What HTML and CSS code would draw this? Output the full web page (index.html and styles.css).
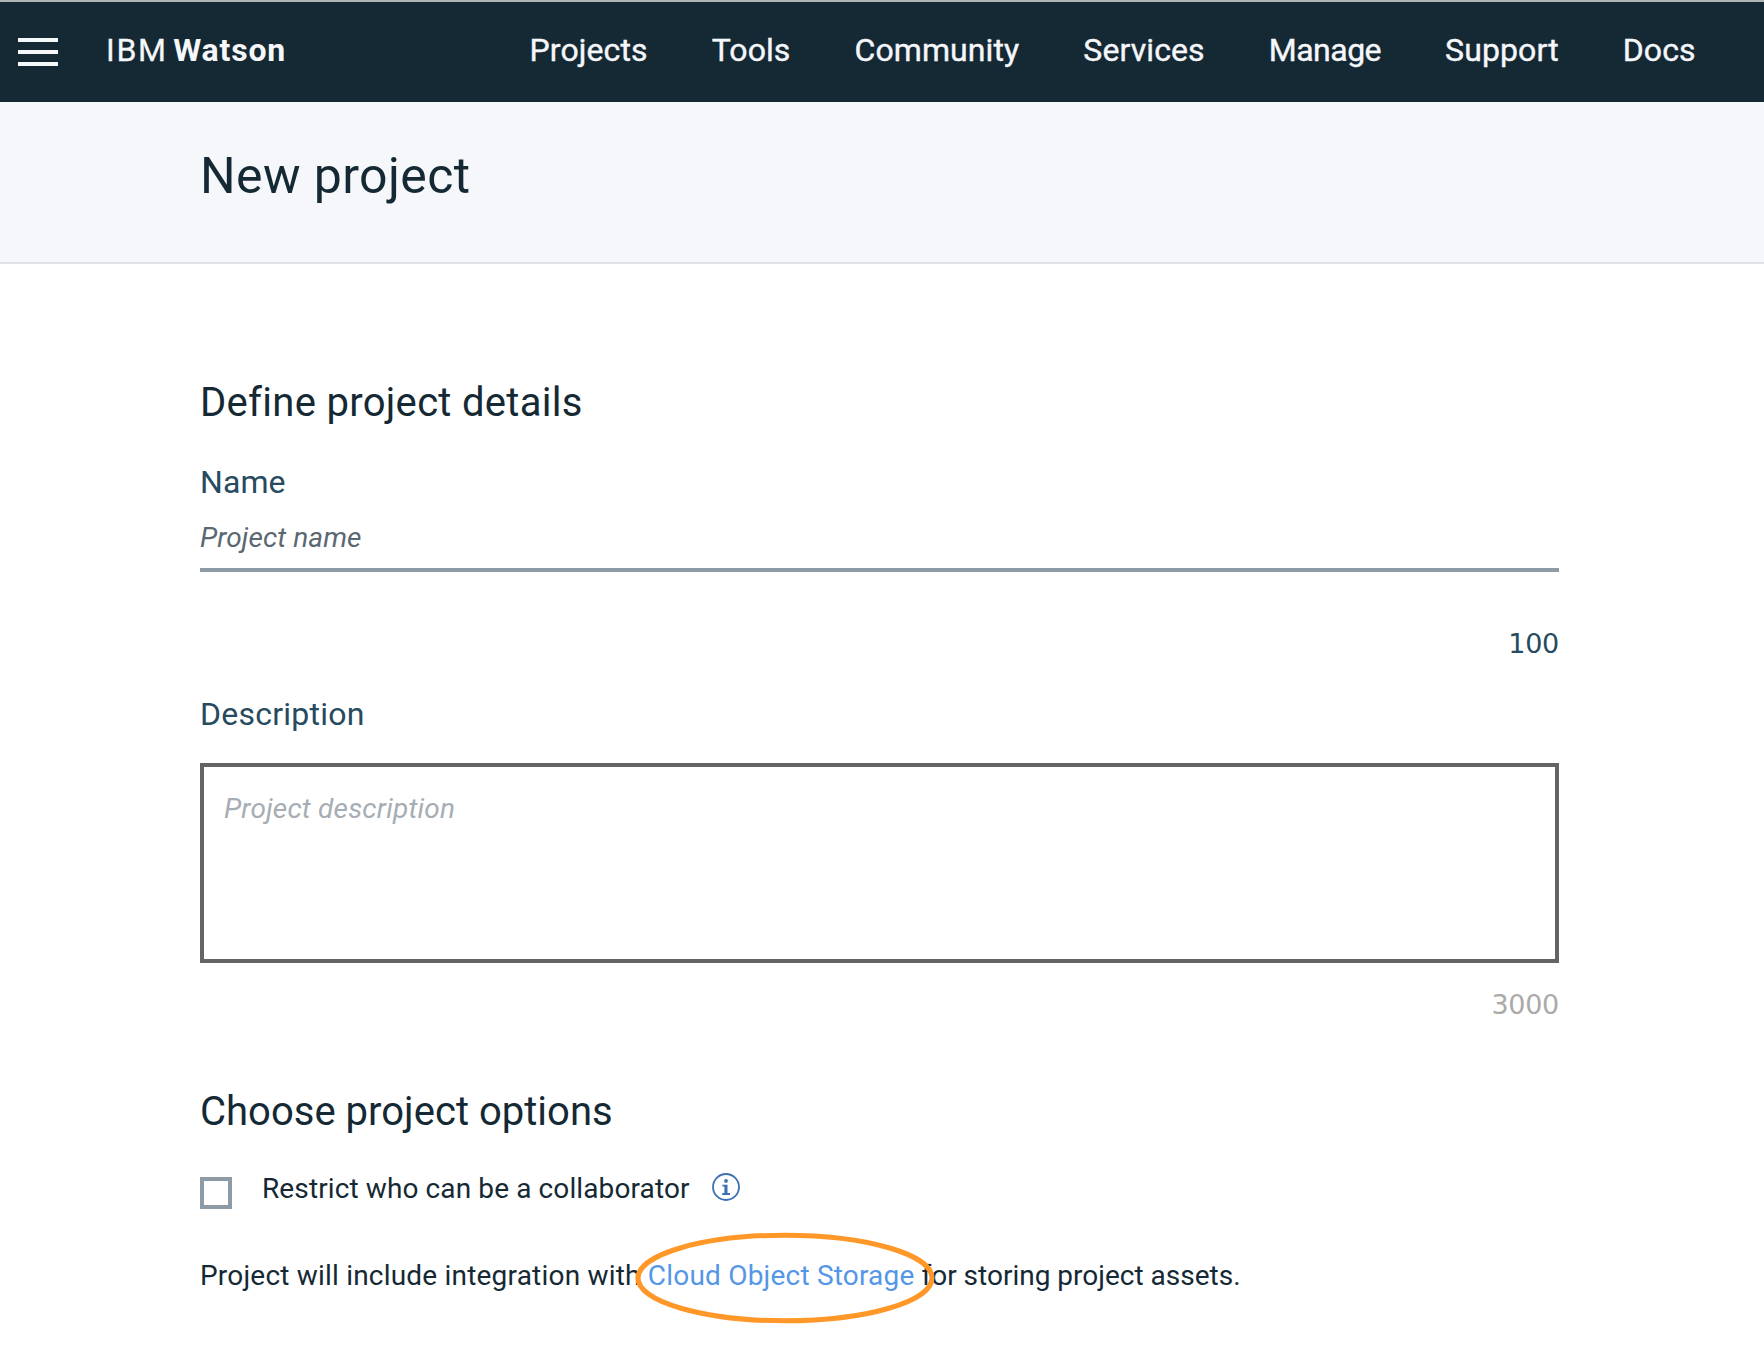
FILE: index.html
```html
<!DOCTYPE html>
<html lang="en">
<head>
  <meta charset="utf-8">
  <title>New project - IBM Watson</title>
  <link rel="stylesheet" href="styles.css">
</head>
<body>
  <header class="topbar">
    <svg class="menu-icon" width="40" height="28" viewBox="0 0 40 28" aria-hidden="true">
      <path d="M0 2H40M0 14H40M0 26H40" stroke="#f5f7fa" stroke-width="4"/>
    </svg>
    <div class="brand"><span class="brand-ibm">IBM </span><strong class="brand-name">Watson</strong></div>
    <nav class="nav">
      <a>Projects</a>
      <a>Tools</a>
      <a>Community</a>
      <a>Services</a>
      <a class="tight">Manage</a>
      <a>Support</a>
      <a>Docs</a>
    </nav>
  </header>

  <div class="page-head"><h1 class="page-title">New project</h1></div>

  <main class="form">
    <h2 class="section-title">Define project details</h2>
    <label class="label" for="name">Name</label>
    <input class="name-input" id="name" type="text" placeholder="Project name">
    <div class="counter">100</div>

    <label class="label label-desc" for="desc">Description</label>
    <textarea class="desc-input" id="desc" placeholder="Project description"></textarea>
    <div class="counter counter-muted">3000</div>

    <h2 class="section-title section-options">Choose project options</h2>
    <div class="option">
      <span class="checkbox"></span>
      <span class="option-text">Restrict who can be a collaborator</span>
      <svg class="info" width="28" height="28" viewBox="0 0 28 28" aria-hidden="true">
        <circle cx="14" cy="14" r="13" fill="none" stroke="#3d70b2" stroke-width="1.8"/>
        <circle cx="14" cy="7.9" r="1.9" fill="#3d70b2"/>
        <path d="M10.4 11.8H15.5V20H18V22H10.2V20H12.4V13.6H10.4Z" fill="#3d70b2"/>
      </svg>
    </div>
    <p class="note"><span class="note-lead">Project will include integration with <span class="marked"><a class="link">Cloud Object Storage</a><svg class="ring" width="300" height="92" viewBox="0 0 300 92" aria-hidden="true"><ellipse cx="150" cy="46" rx="147" ry="42.8" fill="none" stroke="#ff9729" stroke-width="5"/></svg></span></span> for storing project assets.</p>
  </main>
</body>
</html>
```

FILE: styles.css
```css
* { box-sizing: border-box; }

body {
  margin: 0;
  min-height: 1366px;
  background: #fff;
  color: #152934;
  font-family: Roboto, "Liberation Sans", sans-serif;
}

h1, h2, p { margin: 0; font-weight: 400; }

/* Top bar */
.topbar {
  display: flex;
  align-items: flex-start;
  height: 102px;
  padding: 28px 0 0 18px;
  border-top: 2px solid #b1b3b5;
  background: #152934;
  color: #f5f7fa;
  font-size: 32px;
  line-height: 40px;
}
.menu-icon { margin-top: 8px; }
.brand { width: 423.5px; margin-left: 48px; white-space: pre; }
.brand-ibm { letter-spacing: 1.7px; word-spacing: -4px; -webkit-text-stroke: .3px; }
.brand-name { font-weight: 700; letter-spacing: .8px; }
.nav { display: flex; gap: 64px; letter-spacing: .1px; -webkit-text-stroke: .4px; }
.nav .tight { letter-spacing: -.5px; }

/* Page heading */
.page-head {
  height: 162px;
  padding: 44px 0 0 200px;
  border-bottom: 2px solid #dfe3e6;
  background: #f5f7fb;
}
.page-title { font-size: 50px; line-height: 60px; letter-spacing: .4px; }

/* Form */
.form {
  display: flex;
  flex-direction: column;
  width: 1359px;
  margin: 0 0 0 200px;
  padding-top: 115px;
}
.section-title { font-size: 40px; line-height: 48px; letter-spacing: .3px; }
.section-options { margin-top: 65px; letter-spacing: .02px; }
.label {
  margin-top: 35px;
  color: #264a60;
  font-size: 32px;
  line-height: 40px;
  letter-spacing: .1px;
}
.label-desc { margin-top: 32px; letter-spacing: .25px; }

.name-input {
  height: 53px;
  margin-top: 17px;
  padding: 0 0 13px 0;
  border: 0;
  border-bottom: 4px solid #8c9ba5;
  background: none;
  font: italic 28px/36px Roboto, sans-serif;
  letter-spacing: .1px;
}
.name-input::placeholder { color: #5a6872; opacity: 1; }

.desc-input {
  height: 200px;
  margin-top: 29px;
  padding: 24px 20px;
  border: 4px solid #646464;
  border-radius: 0;
  background: #fff;
  font: italic 28px/36px Roboto, sans-serif;
  letter-spacing: .2px;
  resize: none;
}
.desc-input::placeholder { color: #a6adb4; opacity: 1; }

.counter {
  margin-top: 54px;
  color: #264a60;
  font: 27px/36px "DejaVu Sans", sans-serif;
  letter-spacing: -.3px;
  text-align: right;
}
.counter-muted { margin-top: 24px; color: #aaa; }

/* Options */
.option {
  display: flex;
  align-items: flex-start;
  height: 38px;
  margin-top: 35px;
}
.checkbox { width: 32px; height: 32px; margin-top: 6px; border: 4px solid #8c9ba5; }
.option-text {
  margin-left: 30px;
  font-size: 28px;
  line-height: 36px;
  letter-spacing: .11px;
}
.info { margin: 2px 0 0 22px; }

.note { margin-top: 49px; font-size: 28px; line-height: 36px; }
.note-lead { letter-spacing: .2px; }
.marked { position: relative; }
.link { color: #5596e6; }
.ring { position: absolute; left: -13px; top: -27px; }
```
